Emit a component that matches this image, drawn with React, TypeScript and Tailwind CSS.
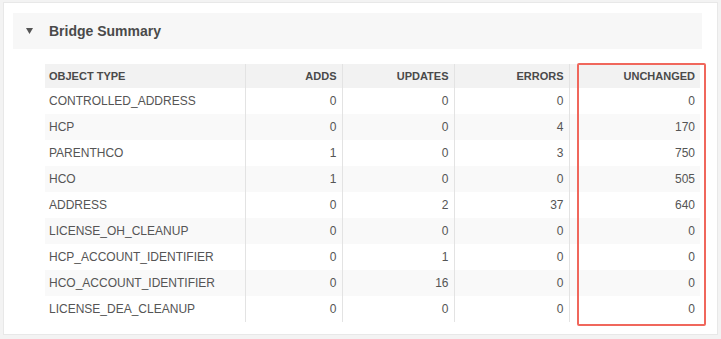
import * as React from "react";

const rows: [string, number, number, number, number][] = [
  ["CONTROLLED_ADDRESS", 0, 0, 0, 0],
  ["HCP", 0, 0, 4, 170],
  ["PARENTHCO", 1, 0, 3, 750],
  ["HCO", 1, 0, 0, 505],
  ["ADDRESS", 0, 2, 37, 640],
  ["LICENSE_OH_CLEANUP", 0, 0, 0, 0],
  ["HCP_ACCOUNT_IDENTIFIER", 0, 1, 0, 0],
  ["HCO_ACCOUNT_IDENTIFIER", 0, 16, 0, 0],
  ["LICENSE_DEA_CLEANUP", 0, 0, 0, 0],
];

const headers = ["OBJECT TYPE", "ADDS", "UPDATES", "ERRORS", "UNCHANGED"];
const widths = ["w-[200px]", "w-[97px]", "w-[112px]", "w-[115px]", "w-[131px]"];

export default function App() {
  return (
    <div className="h-[339px] w-[721px] bg-[#f3f3f3] pt-[2px] px-[3px] font-['Liberation_Sans',Arial,sans-serif]">
      <div className="h-[333px] bg-white border border-[#e8e8e8] pt-[10px] pl-[9px]">
        {/* section header */}
        <div className="w-[689px] h-[36px] bg-[#f7f7f7] flex items-center">
          <svg width="7" height="6" viewBox="0 0 7 6" className="ml-[13px]">
            <path d="M0 0 L7 0 L3.5 6 Z" fill="#555" />
          </svg>
          <span className="ml-[16px] text-[14px] font-bold text-[#4a4a4a]">Bridge Summary</span>
        </div>

        <div className="relative ml-[32px] mt-[15px] w-[655px]">
          <table className="w-[655px] table-fixed border-collapse text-[#555]">
            <thead>
              <tr className="h-[24px] bg-[#f2f2f2]">
                {headers.map((h, i) => (
                  <th
                    key={h}
                    className={`${widths[i]} text-[11px] font-bold text-[#4a4a4a] p-0 ${
                      i === 0 ? "text-left pl-[4px]" : "text-right pr-[5px] border-l border-[#e3e3e3]"
                    }`}
                  >
                    {h}
                  </th>
                ))}
              </tr>
            </thead>
            <tbody>
              {rows.map((r, ri) => (
                <tr key={r[0]} className={`h-[26px] ${ri % 2 === 1 ? "bg-[#f9f9f9]" : "bg-white"}`}>
                  {r.map((c, i) => (
                    <td
                      key={i}
                      className={`text-[12px] p-0 ${
                        i === 0 ? "text-left pl-[4px]" : "text-right pr-[5px] border-l border-[#e3e3e3]"
                      }`}
                    >
                      {c}
                    </td>
                  ))}
                </tr>
              ))}
            </tbody>
          </table>

          {/* highlight annotation */}
          <div className="absolute left-[532px] top-[-1px] w-[129px] h-[263px] border-2 border-[#f0675c] rounded-[2px]" />
        </div>
      </div>
    </div>
  );
}
